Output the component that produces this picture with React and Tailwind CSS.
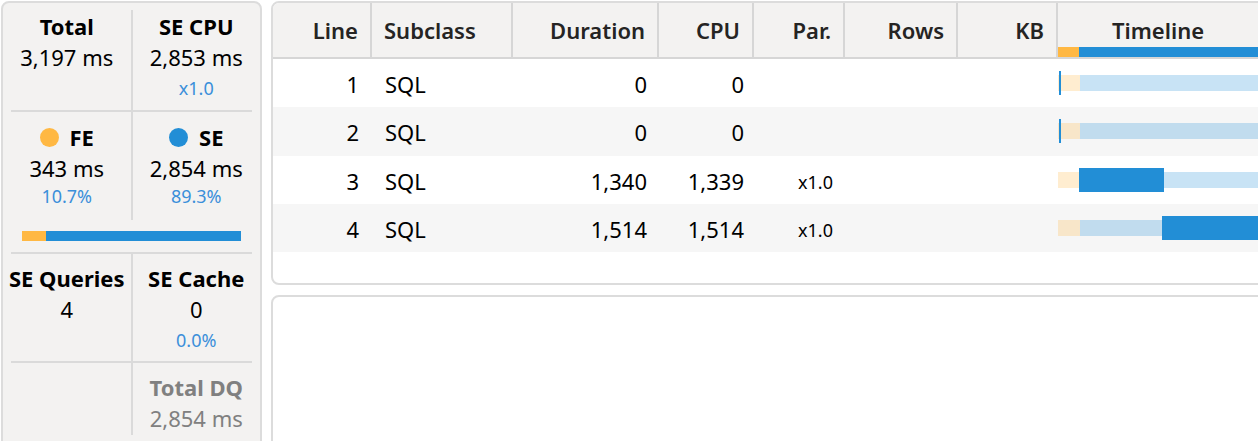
import React from "react";

const font = { fontFamily: '"Noto Sans", "Open Sans", sans-serif' };

function VDiv() {
  return <div className="w-[2px] self-stretch bg-[#dadada]" />;
}
function HDiv() {
  return <div className="mx-[8px] h-[2px] shrink-0 bg-[#dadada]" />;
}

function Title({ children, gray }) {
  return (
    <div className={`text-[22px] leading-[31px] font-bold whitespace-nowrap ${gray ? "text-[#808080]" : "text-black"}`}>
      {children}
    </div>
  );
}
function Value({ children, gray }) {
  return (
    <div className={`text-[22px] leading-[31px] whitespace-nowrap ${gray ? "text-[#808080]" : "text-black"}`}>
      {children}
    </div>
  );
}
function Small({ children, className = "" }) {
  return <div className={`text-[18px] leading-[24px] text-[#3b8fda] ${className}`}>{children}</div>;
}

function LeftPanel() {
  return (
    <div className="w-[261px] h-[460px] shrink-0 rounded-[8px] border-2 border-[#dcdcdc] bg-[#f3f2f1] flex flex-col pt-[7px]">
      <div className="flex h-[100px] shrink-0">
        <div className="flex-1 flex flex-col items-center pt-[1px]">
          <Title>Total</Title>
          <Value>3,197 ms</Value>
        </div>
        <VDiv />
        <div className="flex-1 flex flex-col items-center pt-[1px]">
          <Title>SE CPU</Title>
          <Value>2,853 ms</Value>
          <Small className="mt-[3px]">x1.0</Small>
        </div>
      </div>
      <HDiv />
      <div className="flex h-[108px] shrink-0">
        <div className="flex-1 flex flex-col items-center pt-[10px]">
          <div className="flex items-center gap-[11px]">
            <span className="w-[19px] h-[19px] rounded-full bg-[#ffb843]" />
            <Title>FE</Title>
          </div>
          <Value>343 ms</Value>
          <Small>10.7%</Small>
        </div>
        <VDiv />
        <div className="flex-1 flex flex-col items-center pt-[10px]">
          <div className="flex items-center gap-[11px]">
            <span className="w-[19px] h-[19px] rounded-full bg-[#228ed6]" />
            <Title>SE</Title>
          </div>
          <Value>2,854 ms</Value>
          <Small>89.3%</Small>
        </div>
      </div>
      <div className="h-[32px] shrink-0 flex items-center px-[19px]">
        <div className="flex h-[10px] w-full">
          <div className="w-[24px] bg-[#ffb843]" />
          <div className="flex-1 bg-[#228ed6]" />
        </div>
      </div>
      <HDiv />
      <div className="flex h-[107px] shrink-0">
        <div className="flex-1 flex flex-col items-center pt-[9px]">
          <Title>SE Queries</Title>
          <Value>4</Value>
        </div>
        <VDiv />
        <div className="flex-1 flex flex-col items-center pt-[9px]">
          <Title>SE Cache</Title>
          <Value>0</Value>
          <Small className="mt-[3px]">0.0%</Small>
        </div>
      </div>
      <HDiv />
      <div className="flex h-[72px] shrink-0">
        <div className="flex-1" />
        <VDiv />
        <div className="flex-1 flex flex-col items-center pt-[9px]">
          <Title gray>Total DQ</Title>
          <Value gray>2,854 ms</Value>
        </div>
      </div>
    </div>
  );
}

const cols = [
  { key: "line", label: "Line", w: "w-[99px]", align: "right" },
  { key: "sub", label: "Subclass", w: "w-[141px]", align: "left" },
  { key: "dur", label: "Duration", w: "w-[146px]", align: "right" },
  { key: "cpu", label: "CPU", w: "w-[95px]", align: "right" },
  { key: "par", label: "Par.", w: "w-[91px]", align: "right" },
  { key: "rows", label: "Rows", w: "w-[113px]", align: "right" },
  { key: "kb", label: "KB", w: "w-[100px]", align: "right" },
];

const rows = [
  { line: "1", sub: "SQL", dur: "0", cpu: "0", par: "", start: 1, width: 2, alt: false },
  { line: "2", sub: "SQL", dur: "0", cpu: "0", par: "", start: 1, width: 2, alt: true },
  { line: "3", sub: "SQL", dur: "1,340", cpu: "1,339", par: "x1.0", start: 21, width: 85, alt: false },
  { line: "4", sub: "SQL", dur: "1,514", cpu: "1,514", par: "x1.0", start: 104, width: 100, alt: true },
];

function Timeline({ start, width }) {
  return (
    <div className="relative w-[200px] h-full shrink-0">
      <div className="absolute left-0 top-[16px] h-[16px] w-[22px] bg-[#ffb843]/25" />
      <div className="absolute left-[22px] top-[16px] h-[16px] right-0 bg-[#228ed6]/25" />
      <div className="absolute top-[12px] h-[24px] bg-[#228ed6]" style={{ left: start, width }} />
    </div>
  );
}

function TablePanel() {
  return (
    <div className="w-[1000px] h-[284px] shrink-0 rounded-[8px] border-2 border-[#dcdcdc] bg-white overflow-hidden">
      <div className="flex h-[56px] bg-[#f3f2f1] border-b-2 border-[#d6d6d6]">
        {cols.map((c) => (
          <div
            key={c.key}
            className={`${c.w} shrink-0 h-full border-r-2 border-[#d6d6d6] pt-[12px] text-[22px] leading-[31px] font-semibold text-[#252423] ${
              c.align === "right" ? "text-right pr-[12px]" : "text-left pl-[12px]"
            }`}
          >
            {c.label}
          </div>
        ))}
        <div className="w-[200px] shrink-0 h-full flex flex-col">
          <div className="pt-[12px] text-[22px] leading-[31px] font-semibold text-[#252423] text-center">Timeline</div>
          <div className="mt-auto flex h-[10px]">
            <div className="w-[21px] bg-[#ffb843]" />
            <div className="flex-1 bg-[#228ed6]" />
          </div>
        </div>
      </div>
      {rows.map((r) => (
        <div key={r.line} className={`flex h-[48.25px] items-center ${r.alt ? "bg-[#f6f6f6]" : "bg-white"}`}>
          <div className="w-[99px] shrink-0 text-right pr-[13px] text-[22px] leading-[31px] pt-[3px] text-black">{r.line}</div>
          <div className="w-[141px] shrink-0 text-left pl-[13px] text-[22px] leading-[31px] pt-[3px] text-black">{r.sub}</div>
          <div className="w-[146px] shrink-0 text-right pr-[12px] text-[22px] leading-[31px] pt-[3px] text-black">{r.dur}</div>
          <div className="w-[95px] shrink-0 text-right pr-[10px] text-[22px] leading-[31px] pt-[3px] text-black">{r.cpu}</div>
          <div className="w-[91px] shrink-0 text-right pr-[12px] text-[18px] leading-[31px] pt-[6px] text-black">{r.par}</div>
          <div className="w-[113px] shrink-0" />
          <div className="w-[100px] shrink-0" />
          <Timeline start={r.start} width={r.width} />
        </div>
      ))}
    </div>
  );
}

export default function App() {
  return (
    <div className="w-[1258px] h-[441px] overflow-hidden bg-white flex gap-[9px] pl-[1px] pt-[1px]" style={font}>
      <LeftPanel />
      <div className="flex flex-col gap-[10px]">
        <TablePanel />
        <div className="w-[1000px] h-[200px] shrink-0 rounded-[8px] border-2 border-[#dcdcdc] bg-white" />
      </div>
    </div>
  );
}
